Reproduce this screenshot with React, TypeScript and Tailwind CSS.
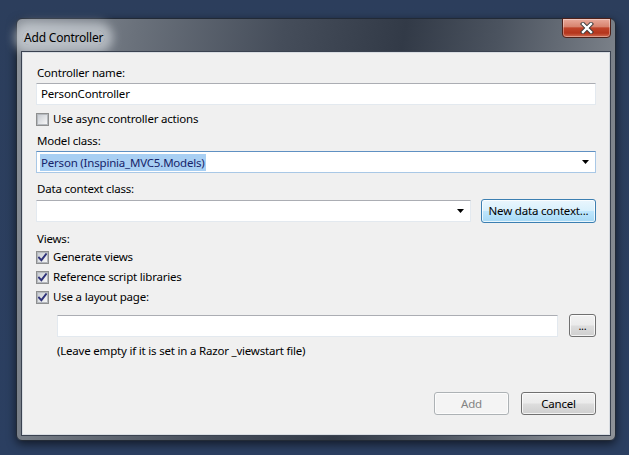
import React from 'react';

function CheckBox({ checked }: { checked?: boolean }) {
    return (
        <span className="flex h-[13px] w-[13px] shrink-0 items-center justify-center border border-[#8e8f8f] bg-[#f4f4f4]">
            <span className="flex h-[11px] w-[11px] items-center justify-center border border-[#b5b9be] bg-[linear-gradient(135deg,#c9cdd3,#f7f7f7)]">
                {checked && (
                    <svg width="9" height="9" viewBox="0 0 9 9">
                        <path d="M1 4.6 L3.4 7.2 L8 1.2" fill="none" stroke="#2e327a" strokeWidth={1.9} strokeLinecap="square" />
                    </svg>
                )}
            </span>
        </span>
    );
}

function Arrow() {
    return (
        <svg width="7" height="4" viewBox="0 0 7 4" className="shrink-0">
            <path d="M0 0h7L3.5 4z" fill="#000" />
        </svg>
    );
}

type BtnVariant = 'normal' | 'hover' | 'disabled';

function Button({ children, variant = 'normal', className }: { children: React.ReactNode; variant?: BtnVariant; className?: string }) {
    const styles: Record<BtnVariant, string> = {
        normal: 'border-[#707070] bg-[linear-gradient(to_bottom,#f2f2f2_0%,#ebebeb_48%,#dddddd_52%,#cfcfcf_100%)] text-black',
        hover: 'border-[#3c7fb1] bg-[linear-gradient(to_bottom,#eaf6fd_0%,#d9f0fc_48%,#bee6fd_52%,#a7d9f5_100%)] text-black',
        disabled: 'border-[#adb2b5] bg-[#f4f4f4] text-[#838383]',
    };
    return (
        <div
            className={
                'flex items-center justify-center rounded-[3px] border shadow-[inset_0_0_0_1px_rgba(255,255,255,0.75)] ' +
                styles[variant] +
                ' ' +
                (className ?? '')
            }
        >
            {children}
        </div>
    );
}

export default function App() {
    return (
        <div className="min-h-screen bg-[linear-gradient(to_bottom,#2c3e5c,#2b3f61)] pl-[16px] pt-[18px] font-['Noto_Sans',sans-serif] text-[11.5px] leading-[16px] tracking-[-0.2px] text-black">
            {/* Window frame */}
            <div className="flex h-[423px] w-[600px] flex-col rounded-[6px] border border-[#222a36] bg-[linear-gradient(100deg,#8d939b_0%,#6a717b_18%,#454d5a_40%,#323a47_58%,#4b535f_72%,#7b8189_90%,#8e9298_100%)] px-[5px] pb-[5px] shadow-[0_3px_10px_rgba(0,0,0,0.6)]">
                {/* Title bar */}
                <div className="flex h-[33px] items-start justify-between">
                    <div className="flex h-[26px] items-end">
                        <span className="rounded-full bg-[rgba(222,226,231,0.6)] px-[2px] text-[12px] leading-[15px] shadow-[0_0_10px_8px_rgba(222,226,231,0.6)]">
                            Add Controller
                        </span>
                    </div>
                    <div className="-mt-px mr-[-1px] flex h-[20px] w-[49px] items-center justify-center rounded-b-[4px] border border-[#4e2119] bg-[linear-gradient(to_bottom,#e9aa9b_0%,#d8846f_42%,#c0442a_50%,#b4351c_78%,#d06c52_100%)] shadow-[inset_0_0_0_1px_rgba(255,255,255,0.35)]">
                        <svg width="14" height="12" viewBox="0 0 14 12">
                            <path d="M3 2 L11 10 M11 2 L3 10" stroke="#3a3a3a" strokeWidth={4.2} strokeLinecap="square" />
                            <path d="M3 2 L11 10 M11 2 L3 10" stroke="#ffffff" strokeWidth={2.4} strokeLinecap="square" />
                        </svg>
                    </div>
                </div>

                {/* Client area */}
                <div className="flex flex-1 flex-col border border-[#d9dde2] bg-[#f0f0f0] px-[13px] pt-[12px] outline outline-1 outline-[#3a4250]">
                    <div className="h-[16px] pl-px">Controller name:</div>
                    <div className="mt-[2px] flex h-[22px] items-center border border-[#e3e9ef] border-t-[#abadb3] bg-white pl-[4px]">
                        PersonController
                    </div>

                    <div className="mt-[4px] flex h-[20px] items-center gap-[4px]">
                        <CheckBox />
                        <span>Use async controller actions</span>
                    </div>

                    <div className="mt-[4px] h-[16px] pl-px">Model class:</div>
                    <div className="mt-[2px] flex h-[22px] items-center justify-between border border-[#a9c8e6] border-t-[#5f90c2] bg-white pl-[3px] pr-[6px]">
                        <span className="bg-[#a8cff3] px-px leading-[17px] text-[#16246a]">Person (Inspinia_MVC5.Models)</span>
                        <Arrow />
                    </div>

                    <div className="mt-[8px] h-[16px] pl-px">Data context class:</div>
                    <div className="mt-[2px] flex h-[24px] items-center gap-[10px]">
                        <div className="flex h-[22px] flex-1 items-center justify-end border border-[#e3e9ef] border-t-[#abadb3] bg-white pr-[6px]">
                            <Arrow />
                        </div>
                        <Button variant="hover" className="h-[24px] w-[115px]">
                            New data context...
                        </Button>
                    </div>

                    <div className="mt-[8px] h-[16px] pl-px">Views:</div>
                    <div className="flex h-[20px] items-center gap-[4px]">
                        <CheckBox checked />
                        <span>Generate views</span>
                    </div>
                    <div className="flex h-[20px] items-center gap-[4px]">
                        <CheckBox checked />
                        <span>Reference script libraries</span>
                    </div>
                    <div className="flex h-[20px] items-center gap-[4px]">
                        <CheckBox checked />
                        <span>Use a layout page:</span>
                    </div>

                    <div className="mt-[7px] flex h-[23px] items-center gap-[11px] pl-[21px]">
                        <div className="h-[22px] flex-1 border border-[#e3e9ef] border-t-[#abadb3] bg-white" />
                        <Button className="h-[23px] w-[27px]">
                            <span className="text-[11px] leading-[8px]">...</span>
                        </Button>
                    </div>
                    <div className="mt-[6px] h-[16px] pl-[21px]">(Leave empty if it is set in a Razor _viewstart file)</div>

                    <div className="mt-[33px] flex justify-end gap-[12px]">
                        <Button variant="disabled" className="h-[23px] w-[75px]">
                            Add
                        </Button>
                        <Button className="h-[23px] w-[75px]">Cancel</Button>
                    </div>
                </div>
            </div>
        </div>
    );
}
